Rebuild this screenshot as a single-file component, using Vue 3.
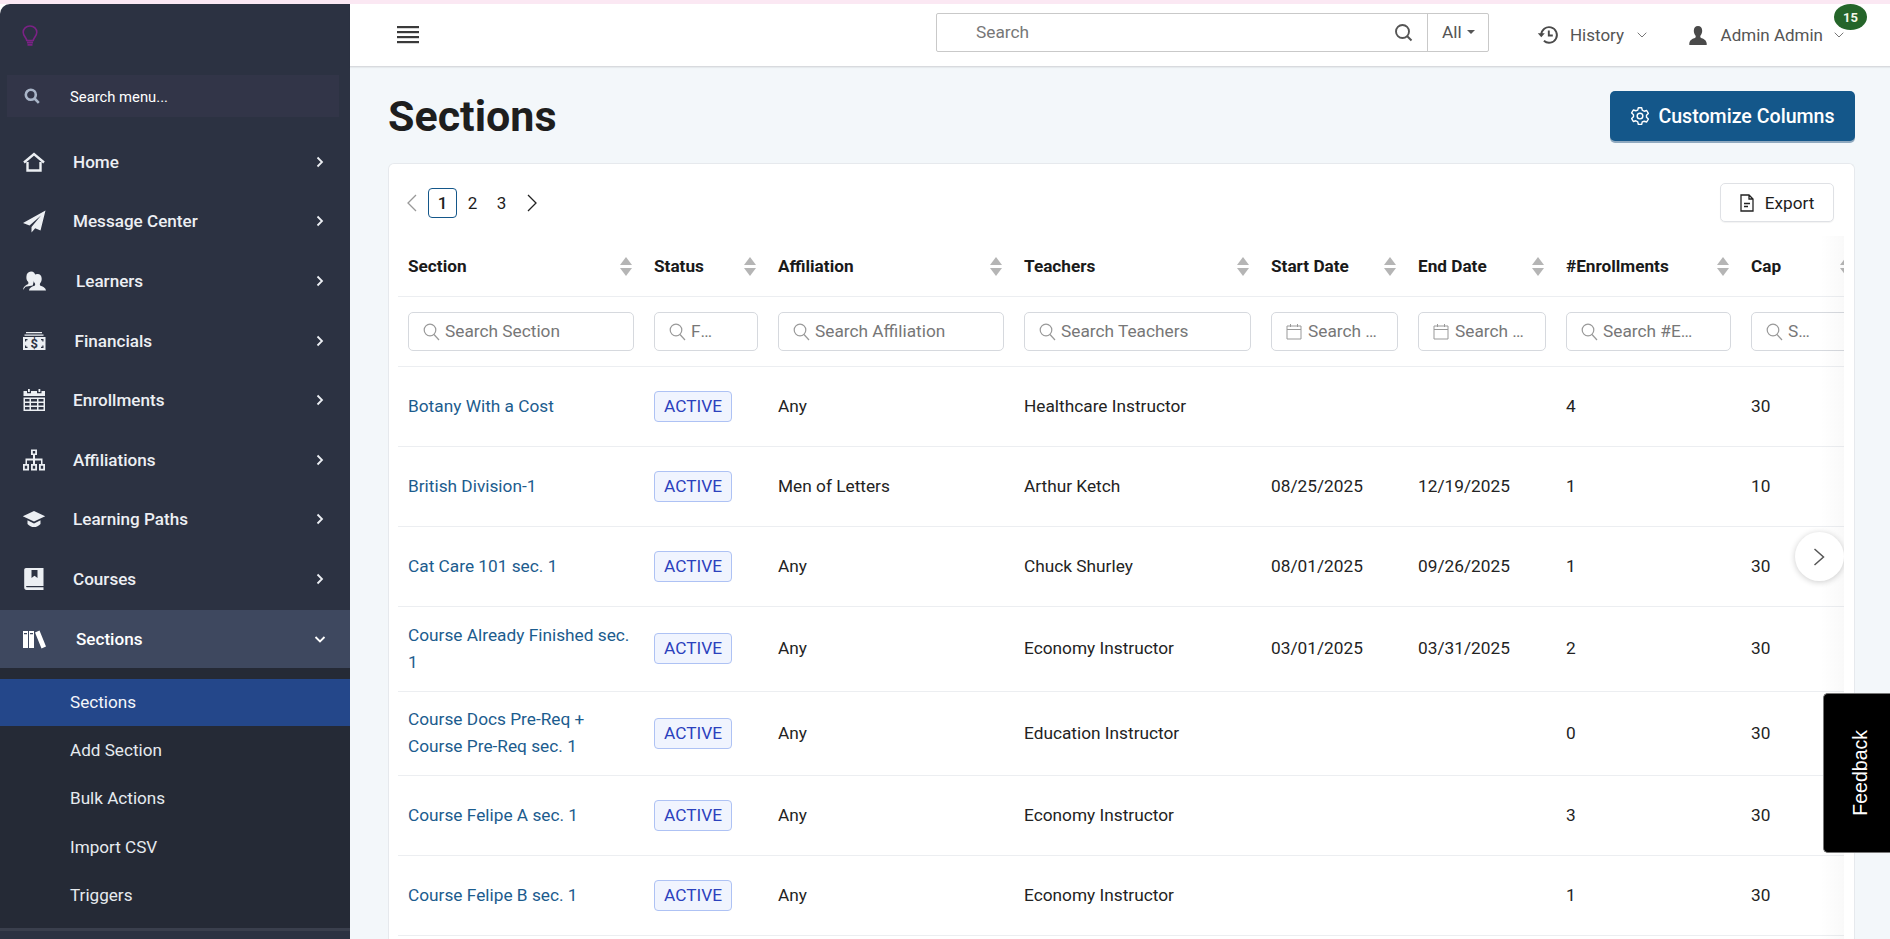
<script setup>
const menu = [
  { label: 'Home', shift: 0, icon: { s: ['M2 12.5 12 4l10 8.5', 'M5.5 12v8.5h13V12'], sw: 2.4 } },
  { label: 'Message Center', shift: 0, icon: { f: ['M23.5 1.5 1 14l6.5 2.6L19 6.5 9.5 18v5.5l3.7-4.3 5.3 2.2z'] } },
  { label: 'Learners', shift: 3, icon: { f: ['M9 2.5c2.7 0 4.4 2 4.4 4.6 0 1.700-.5 3.300-1.400 4.500l-1.300 4.900-7.200 1.300-2.500 3.200c.3-3.300 2.600-4.700 5.200-5.900.3-.8.300-1.600-.1-2.300C4.600 11.400 4.300 9.700 4.400 7.800 4.500 4.600 6.200 2.500 9 2.500z', 'M15.500 5c2.600 0 4.200 2 4.200 4.700 0 2-.7 3.700-1.700 4.800-.3.7-.2 1.400.1 2 2.600 1.100 5.400 2 5.900 5H7c.5-3 3.300-3.900 5.900-5 .3-.6.400-1.300.1-2-1-1.100-1.700-2.800-1.700-4.800C11.300 7 12.900 5 15.500 5z'] } },
  { label: 'Financials', shift: 1.5, icon: { f: ['M4 3h16v1.300H4zM2.500 5.500h19v1.300h-19z', 'M1 8h22.500v13H1zM3 10v2.500h1.200v-1.300h1.300V10zM21.500 10H19v1.200h1.300v1.300h1.200zM3 19h2.500v-1.200H4.200v-1.300H3zM21.500 19v-2.500h-1.200v1.300H19V19z'], t: '$' } },
  { label: 'Enrollments', shift: 0, icon: { f: ['M6 1h1.800v3H6zM16.500 1h1.800v3h-1.800z', 'M1.500 3H5v2.200h4V3h6v2.200h4.500V3H23v5H1.500z', 'M1.500 9.500H23V23H1.500zM3 11v2.500h4.500V11zM9 11v2.500h6V11zM16.500 11v2.500h5V11zM3 15v2.500h4.500V15zM9 15v2.500h6V15zM16.500 15v2.500h5V15zM3 19v2.500h4.500V19zM9 19v2.500h6V19zM16.500 19v2.500h5V19z'] } },
  { label: 'Affiliations', shift: 0, icon: { f: ['M9 1.500h6v5.500h-2v3.500h7.500V16h2.500v6.500h-6V16h2v-3.500H13V16h2v6.500H9V16h2v-3.500H5V16h2v6.500H1V16h2.500v-5.500H11V7H9zM10.800 3v2.500h2.400V3zM2.800 17.700v3h2.400v-3zM10.800 17.700v3h2.400v-3zM18.800 17.700v3h2.400v-3z'] } },
  { label: 'Learning Paths', shift: 0, icon: { f: ['M12 4 .8 9.300 12 14.600 23.200 9.300z', 'M5.500 13.300 12 16.400l6.500-3.100v3.600C16.700 19 14.500 20 12 20s-4.700-1-6.500-3.100z'] } },
  { label: 'Courses', shift: 0, icon: { f: ['M4 1h17.500v18H5c-1.200 0-1.600 1.100 0 1.300h16.500V23H4.500C3 23 2.200 22 2.200 20.500V3C2.200 1.800 2.900 1 4 1zM9.500 3v8l3-2.200 3 2.200V3z'] } },
  { label: 'Sections', shift: 3, active: true, icon: { f: ['M1 4h5v17H1zM2 6v1.200h3V6zM7 4h5v17H7zM8 6v1.200h3V6zM13 5.500l4.500-2 6.500 16-4.500 2z'] } },
]
const sub = ['Sections', 'Add Section', 'Bulk Actions', 'Import CSV', 'Triggers']

const columns = [
  { name: 'Section', width: 246, ph: 'Search Section', pr: 8 },
  { name: 'Status', width: 124, ph: 'Filter', pr: 42 },
  { name: 'Affiliation', width: 246, ph: 'Search Affiliation', pr: 8 },
  { name: 'Teachers', width: 247, ph: 'Search Teachers', pr: 8 },
  { name: 'Start Date', width: 147, ph: 'Search Start Date', date: true, pr: 20 },
  { name: 'End Date', width: 148, ph: 'Search End Date', date: true, pr: 20 },
  { name: '#Enrollments', width: 185, ph: 'Search #Enrollments', pr: 36 },
  { name: 'Cap', width: 123, ph: 'Search Cap', pr: 39 },
]
const rows = [
  ['Botany With a Cost', 'Any', 'Healthcare Instructor', '', '', '4', '30'],
  ['British Division-1', 'Men of Letters', 'Arthur Ketch', '08/25/2025', '12/19/2025', '1', '10'],
  ['Cat Care 101 sec. 1', 'Any', 'Chuck Shurley', '08/01/2025', '09/26/2025', '1', '30'],
  ['Course Already Finished sec. 1', 'Any', 'Economy Instructor', '03/01/2025', '03/31/2025', '2', '30'],
  ['Course Docs Pre-Req + Course Pre-Req sec. 1', 'Any', 'Education Instructor', '', '', '0', '30'],
  ['Course Felipe A sec. 1', 'Any', 'Economy Instructor', '', '', '3', '30'],
  ['Course Felipe B sec. 1', 'Any', 'Economy Instructor', '', '', '1', '30'],
]
</script>

<template>
  <div class="page">
    <div class="strip"></div>
    <div class="shell">
      <aside class="sidebar">
        <div class="logo">
          <svg width="16" height="22" viewBox="0 0 16 22" fill="none" stroke="#7b2285" stroke-width="1.6">
            <path d="M8 1C4 1 1.200 3.900 1.200 7.300c0 3.400 3 5.200 3.600 8.200h6.400c.6-3 3.600-4.800 3.600-8.200C14.800 3.900 12 1 8 1z" />
            <path d="M5 17.500h6M5.500 19.800h5" stroke-width="1.800" />
          </svg>
        </div>
        <div class="side-search">
          <svg width="16" height="16" viewBox="0 0 16 16" fill="none" stroke="#a9b5c8" stroke-width="2.600">
            <circle cx="6.800" cy="6.800" r="5" /><path d="m10.500 10.500 4.300 4.300" />
          </svg>
          <span>Search menu...</span>
        </div>
        <nav>
          <div v-for="m in menu" :key="m.label" class="item" :class="{ on: m.active }">
            <svg class="mi" width="24" height="24" viewBox="0 0 24 24">
              <path v-for="d in m.icon.f || []" :key="d" :d="d" fill="currentColor" fill-rule="evenodd" />
              <path v-for="d in m.icon.s || []" :key="d" :d="d" fill="none" stroke="currentColor" :stroke-width="m.icon.sw" />
              <text v-if="m.icon.t" x="12.300" y="19" class="dollar" text-anchor="middle">{{ m.icon.t }}</text>
            </svg>
            <span class="lbl" :style="{ marginLeft: m.shift + 'px' }">{{ m.label }}</span>
            <svg class="chev" width="12" height="12" viewBox="0 0 12 12" fill="none" stroke="currentColor" stroke-width="1.800">
              <path v-if="m.active" d="M1.500 4 6 8.500 10.500 4" />
              <path v-else d="M3.500 1.500 8 6l-4.500 4.500" />
            </svg>
          </div>
          <div class="sub">
            <div v-for="(s, i) in sub" :key="s" class="sub-item" :class="{ on: i === 0 }">{{ s }}</div>
          </div>
        </nav>
      </aside>

      <main class="main">
        <header class="top">
          <svg class="burger" width="22" height="18" viewBox="0 0 22 18" fill="#3a3a3a">
            <rect y="0" width="22" height="2.200" /><rect y="5" width="22" height="2.200" /><rect y="10" width="22" height="2.200" /><rect y="15" width="22" height="2.200" />
          </svg>
          <div class="top-search">
            <span class="ts-text">Search</span>
            <svg class="ts-icon" width="19" height="19" viewBox="0 0 19 19" fill="none" stroke="#555" stroke-width="1.900">
              <circle cx="8.500" cy="8.500" r="6.500" /><path d="m13 13 4.500 4.500" />
            </svg>
            <span class="ts-all">All<i class="caret"></i></span>
          </div>
          <div class="tool history">
            <svg width="22" height="20" viewBox="0 0 22 20" fill="none" stroke="#4a4a4a" stroke-width="1.900">
              <path d="M4.300 10a7.800 7.800 0 1 1 2.600 5.800" />
              <path d="M11.800 5.500v5h4" />
              <path d="M0.800 8.300h7l-3.500 4z" fill="#4a4a4a" stroke="none" />
            </svg>
            <span>History</span>
            <svg class="dn" width="10" height="6" viewBox="0 0 10 6" fill="none" stroke="#777" stroke-width="1"><path d="m.7.7 4.300 4.300L9.300.7" /></svg>
          </div>
          <div class="tool user">
            <svg width="18" height="19" viewBox="0 0 18 19" fill="#4a4a4a">
              <path d="M9 0c2.600 0 4.200 2 4.200 4.800 0 2-.8 3.800-1.800 5-.3.800-.1 1.500.3 2 2.700 1 5.600 2.200 6 5.700V19H.3v-1.500c.4-3.500 3.300-4.700 6-5.700.4-.5.600-1.200.3-2-1-1.200-1.800-3-1.800-5C4.800 2 6.400 0 9 0z" />
            </svg>
            <span>Admin Admin</span>
            <svg class="dn" width="10" height="6" viewBox="0 0 10 6" fill="none" stroke="#777" stroke-width="1"><path d="m.7.7 4.300 4.300L9.300.7" /></svg>
            <b class="badge">15</b>
          </div>
        </header>

        <section class="content">
          <div class="title-row">
            <h1>Sections</h1>
            <button class="customize">
              <svg width="20" height="20" viewBox="0 0 24 24" fill="none" stroke="#fff" stroke-width="1.700" stroke-linejoin="round">
                <path d="M10 2h4l.7 3 2.300 1.300 3-.9 2 3.500-2.200 2.100v2.600l2.200 2.100-2 3.500-3-.9L14.700 19l-.7 3h-4l-.7-3L7 17.700l-3 .9-2-3.500 2.200-2.100v-2.600L2 8.300l2-3.500 3 .9L9.300 5z" />
                <circle cx="12" cy="12" r="3.400" />
              </svg>
              Customize Columns
            </button>
          </div>

          <div class="card">
            <div class="toolbar">
              <div class="pager">
                <span class="pg arrow prev">
                  <svg width="11" height="18" viewBox="0 0 11 18" fill="none" stroke="#999" stroke-width="1.300"><path d="M10 1 2 9l8 8" /></svg>
                </span>
                <span class="pg cur">1</span>
                <span class="pg">2</span>
                <span class="pg">3</span>
                <span class="pg arrow next">
                  <svg width="11" height="18" viewBox="0 0 11 18" fill="none" stroke="#222" stroke-width="1.300"><path d="m1 1 8 8-8 8" /></svg>
                </span>
              </div>
              <button class="export">
                <svg width="14" height="18" viewBox="0 0 14 18" fill="none" stroke="#222" stroke-width="1.300">
                  <path d="M1 1h8l4 4v12H1zM9 1v4h4M4 9.500h6M4 12.500h4" />
                </svg>
                Export
              </button>
            </div>

            <div class="scroller">
              <table>
                <colgroup>
                  <col v-for="c in columns" :key="c.name" :style="{ width: c.width + 'px' }" />
                </colgroup>
                <thead>
                  <tr class="head">
                    <th v-for="c in columns" :key="c.name">
                      <div class="th-in">
                        <span>{{ c.name }}</span>
                        <svg class="sort" width="12" height="19" viewBox="0 0 12 19" fill="#b5b5b5">
                          <path d="M6 0l6 8H0zM0 11h12l-6 8z" />
                        </svg>
                      </div>
                    </th>
                  </tr>
                  <tr class="filters">
                    <th v-for="c in columns" :key="c.name">
                      <div class="field">
                        <svg v-if="c.date" class="fi" width="16" height="17" viewBox="0 0 16 17" fill="none" stroke="#999" stroke-width="1">
                          <path d="M1 3h14v13H1zM1 6.500h14M4.500 1v3M11.500 1v3" />
                        </svg>
                        <svg v-else class="fi" width="17" height="18" viewBox="0 0 17 18" fill="none" stroke="#999" stroke-width="1.200">
                          <circle cx="7" cy="7" r="5.800" /><path d="m11 11.500 5 5.500" />
                        </svg>
                        <input type="text" :placeholder="c.ph" :style="{ paddingRight: c.pr + 'px' }" />
                      </div>
                    </th>
                  </tr>
                </thead>
                <tbody>
                  <tr v-for="r in rows" :key="r[0]">
                    <td><a class="link">{{ r[0] }}</a></td>
                    <td><span class="tag">ACTIVE</span></td>
                    <td v-for="(v, i) in r.slice(1)" :key="i">{{ v }}</td>
                  </tr>
                </tbody>
              </table>
              <div class="fade"></div>
              <button class="next-btn">
                <svg width="13" height="20" viewBox="0 0 13 20" fill="none" stroke="#555" stroke-width="1.500"><path d="m1.500 2 9 8-9 8" /></svg>
              </button>
            </div>
          </div>
        </section>
      </main>
    </div>
    <div class="feedback"><span>Feedback</span></div>
  </div>
</template>

<style>
html, body { margin: 0; height: 100%; overflow: hidden; background: #f3f7fa; }
</style>

<style scoped>
.page {
  position: relative;
  height: 939px;
  display: flex;
  flex-direction: column;
  overflow: hidden;
  font-family: Roboto, "Liberation Sans", sans-serif;
  font-size: 16px;
  color: #1d1d1d;
  background: #fff;
}
.strip { height: 4px; background: #fbe8f3; flex: none; }
.shell { flex: 1; min-height: 0; display: flex; background: #fff; }

.sidebar {
  width: 350px;
  flex: none;
  background: #2c3242;
  border-top-left-radius: 10px;
  overflow: hidden;
  color: #eceff3;
}
.logo { height: 71px; padding: 21px 0 0 22px; box-sizing: border-box; }
.side-search {
  margin: 0 11px 15px 7px;
  height: 42px;
  background: #323548;
  display: flex;
  align-items: center;
  padding-left: 17px;
  color: #fff;
  font-size: 14.800px;
}
.side-search span { margin-left: 30px; padding-top: 1px; }
.item {
  height: 59.600px;
  display: flex;
  align-items: center;
  padding-left: 22px;
  font-weight: 500;
  font-size: 17.100px;
  box-sizing: border-box;
}
.item.on { height: 58px; margin-top: 1px; background: #3e485f; color: #fff; }
.mi { flex: none; margin-right: 27px; }
.dollar { font: 700 13px Roboto, sans-serif; fill: #2c3242; }
.lbl { flex: 1; }
.chev { flex: none; margin-right: 24px; }
.sub { background: #252a36; padding: 11px 0 8.400px; border-bottom: 3px solid #3a3f4d; }
.sub-item {
  height: 48.400px;
  display: flex;
  align-items: center;
  padding-left: 70px;
  font-size: 17.120px;
  color: #e6eaef;
}
.sub-item.on { height: 47px; background: #24478a; color: #f4f6fa; }

.main { flex: 1; min-width: 0; display: flex; flex-direction: column; background: #f3f7fa; }
.top {
  height: 63px;
  flex: none;
  box-sizing: border-box;
  background: #fff;
  border-bottom: 1px solid #d8dade;
  box-shadow: 0 1px 1px rgba(0, 0, 0, .05);
  display: flex;
  align-items: center;
  padding: 0 46px 0 47px;
  position: relative;
}
.burger { flex: none; }
.top-search {
  margin-left: auto;
  width: 553px;
  height: 39px;
  margin-top: -6px;
  box-sizing: border-box;
  border: 1px solid #c9c9c9;
  border-radius: 2px;
  display: flex;
  align-items: center;
  color: #777;
  font-size: 17.280px;
}
.ts-text { margin-left: 39px; flex: 1; }
.ts-icon { margin-right: 14px; }
.ts-all { width: 61px; height: 100%; border-left: 1px solid #c9c9c9; box-sizing: border-box; display: flex; align-items: center; padding-left: 14px; color: #555; }
.caret { margin-left: 5px; border: 4px solid transparent; border-top-color: #555; border-bottom: 0; }
.tool { display: flex; align-items: center; color: #555; font-size: 17px; position: relative; }
.history { margin-left: 48px; }
.history span { margin-left: 11px; }
.history .dn { margin-left: 13px; }
.user { margin-left: 41.500px; }
.user span { margin-left: 14px; }
.user .dn { margin-left: 11px; }
.badge {
  position: absolute;
  right: -23px;
  top: -21px;
  width: 33px;
  height: 26px;
  border-radius: 50%;
  background: #25652a;
  color: #f3f6e8;
  font-size: 13px;
  font-weight: 700;
  display: flex;
  align-items: center;
  justify-content: center;
}

.content { flex: 1; min-height: 0; display: flex; flex-direction: column; padding: 24px 35px 0 38px; }
.title-row { display: flex; align-items: center; justify-content: space-between; height: 50px; margin-bottom: 22px; flex: none; }
h1 { margin: 0; font-size: 43px; font-weight: 700; color: #1e1e1e; }
.customize {
  width: 245px;
  height: 50px;
  border: 0;
  border-radius: 5px;
  background: #14578a;
  box-shadow: 0 2px 0 #8fa9bf;
  color: #fff;
  font: 500 19.600px Roboto, sans-serif;
  display: flex;
  align-items: center;
  justify-content: center;
  gap: 8px;
}
.card {
  flex: 1;
  min-height: 0;
  background: #fff;
  border: 1px solid #e6e9ed;
  border-bottom: 0;
  border-radius: 6px 6px 0 0;
  padding: 19px 10px 0 9px;
  overflow: hidden;
}
.toolbar { display: flex; align-items: center; justify-content: space-between; margin-bottom: 14px; height: 39px; padding-right: 10px; }
.pager { display: flex; align-items: center; font-size: 17px; }
.pg { width: 29px; height: 30px; box-sizing: border-box; display: flex; align-items: center; justify-content: center; }
.pg.prev { width: 30px; padding-right: 3px; }
.pg.next { width: 33px; }
.pg.cur { border: 1px solid #14578a; border-radius: 4px; font-weight: 500; margin-right: 1px; }
.export {
  width: 114px;
  height: 39px;
  background: #fff;
  border: 1px solid #dfe1e5;
  border-radius: 5px;
  box-shadow: 0 1px 1px rgba(0, 0, 0, .05);
  font: 400 17.200px Roboto, sans-serif;
  color: #1d1d1d;
  display: flex;
  align-items: center;
  justify-content: center;
  gap: 11px;
}
.scroller { position: relative; overflow: hidden; height: 100%; }
table { border-collapse: collapse; table-layout: fixed; width: 1466px; }
th, td { padding: 0 10px; text-align: left; box-sizing: border-box; }
.head th { height: 60px; padding-top: 1px; border-bottom: 1px solid #eceef1; font-weight: 700; font-size: 17.200px; color: #1a1a1a; }
.th-in { display: flex; align-items: center; justify-content: space-between; padding: 0 2px 0 0; }
.sort { flex: none; margin-right: 0; }
.filters th { height: 70px; border-bottom: 1px solid #eceef1; font-weight: 400; }
.field { position: relative; }
.fi { position: absolute; left: 15px; top: 11px; }
.field input {
  width: 100%;
  height: 39px;
  box-sizing: border-box;
  border: 1px solid #d6d9de;
  border-radius: 5px;
  padding: 0 8px 0 36px;
  font: 400 17.280px Roboto, sans-serif;
  text-overflow: ellipsis;
  background: #fff;
  outline: 0;
}
.field input::placeholder { color: #777; opacity: 1; }
tbody td { height: 80px; padding: 15px 10px; line-height: 27px; border-bottom: 1px solid #eceef1; font-size: 17.280px; color: #232323; }
tbody tr:nth-child(5) td { padding: 14.500px 10px; }
.link { color: #1c5c8e; }
.tag {
  display: inline-block;
  height: 31px;
  line-height: 29px;
  box-sizing: border-box;
  padding: 0 9px;
  border: 1px solid #aec2f4;
  border-radius: 4px;
  background: #f0f4fe;
  color: #2b41bd;
  vertical-align: middle;
}
.fade { position: absolute; top: 0; right: 0; bottom: 0; width: 24px; background: linear-gradient(to right, rgba(0, 0, 0, 0), rgba(0, 0, 0, .025)); pointer-events: none; }
.next-btn {
  position: absolute;
  right: 0;
  top: 296px;
  width: 49px;
  height: 49px;
  padding: 0;
  border: 0;
  border-radius: 50%;
  background: #fff;
  box-shadow: 0 1px 6px rgba(0, 0, 0, .2);
  display: flex;
  align-items: center;
  justify-content: center;
}
.feedback {
  position: absolute;
  right: 0;
  top: 693px;
  width: 67px;
  height: 160px;
  background: #000;
  border: 1px solid #777;
  border-right: 0;
  border-radius: 5px 0 0 5px;
  box-sizing: border-box;
  display: flex;
  align-items: center;
  justify-content: center;
}
.feedback span {
  writing-mode: vertical-rl;
  transform: rotate(180deg);
  color: #fff;
  font: 400 19.500px "Liberation Sans", sans-serif;
  margin-left: 6px;
}
</style>
